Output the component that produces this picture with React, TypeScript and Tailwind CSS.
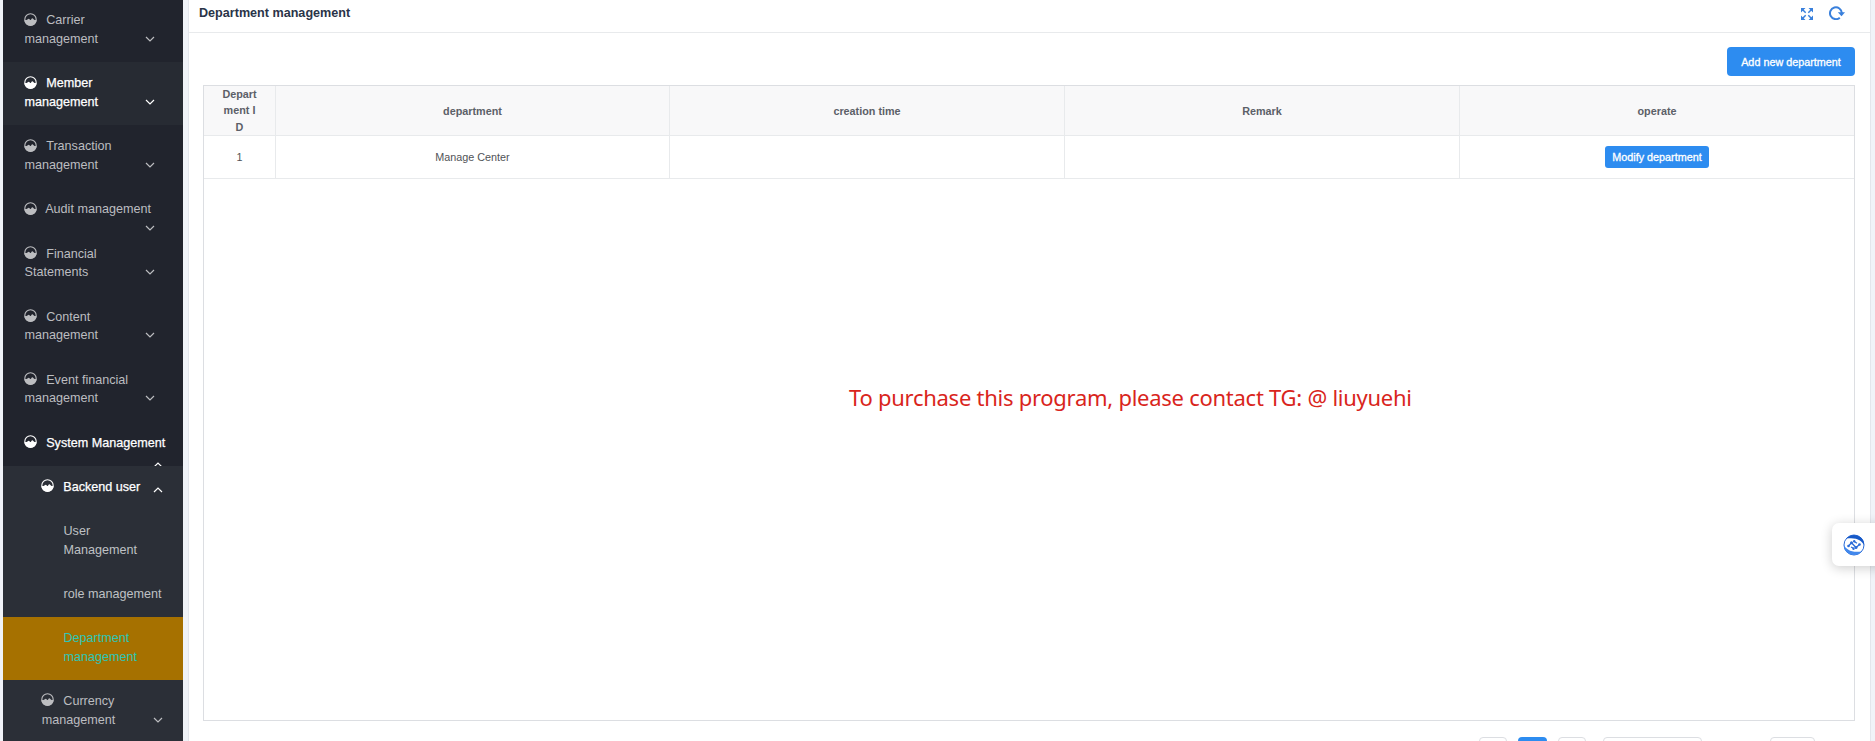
import React from "react";

const Gauge = ({ className = "" }: { className?: string }) => (
  <svg viewBox="0 0 13 13" className={`inline-block h-[13px] w-[13px] ${className}`}>
    <circle cx="6.5" cy="6.5" r="5.7" fill="none" stroke="currentColor" strokeWidth="1.1" />
    <path
      fill="currentColor"
      d="M0.4 6.9 L2.4 6.9 C3.6 6.9 3.9 5.7 4.8 5.7 C5.6 5.7 5.9 7.1 6.5 7.1 C7.1 7.1 7.5 5.3 8.3 5.3 C9.3 5.3 9.4 6.9 10.6 6.9 L12.6 6.9 A6.1 6.1 0 0 1 0.4 6.9Z"
    />
  </svg>
);

const Chevron = ({ up = false }: { up?: boolean }) => (
  <svg viewBox="0 0 10 6" className="h-[6px] w-[10px]" fill="none" stroke="currentColor" strokeWidth="1.2">
    <path d={up ? "M1 5L5 1L9 5" : "M1 1L5 5L9 1"} />
  </svg>
);

type ItemProps = {
  label: React.ReactNode;
  tone?: string;
  lines?: 1 | 2;
  nested?: boolean;
  arrow?: "down" | "up";
  arrowPos?: string;
};

const Item = ({ label, tone = "text-[#bcbdc0]", lines = 2, nested = false, arrow = "down", arrowPos = "right-[28px] top-[36.6px]" }: ItemProps) => (
  <div
    className={`relative overflow-hidden pt-[12px] leading-[18.9px] whitespace-nowrap ${nested ? "pl-[38.7px]" : "pl-[21.6px]"} ${lines === 2 ? "h-[63px]" : "h-[44.1px]"} ${tone}`}
  >
    <Gauge className="-mt-[3px] mr-[9.4px] -ml-[0.8px] align-middle" />
    {label}
    <span className={`absolute flex ${arrowPos}`}>
      <Chevron up={arrow === "up"} />
    </span>
  </div>
);

const Leaf = ({ children, tone = "text-[#bfc1c4]" }: { children: React.ReactNode; tone?: string }) => (
  <div className={`pt-[12.1px] pb-[13.1px] pl-[60.5px] leading-[18.9px] ${tone}`}>{children}</div>
);

const white = "text-white [-webkit-text-stroke:0.25px_white]";

const Sidebar = () => (
  <aside className="h-[741px] w-[180px] shrink-0 overflow-hidden bg-[#21242d] text-[12.6px]">
    <div className="-mt-[0.6px]">
      <Item label={<>Carrier<br />management</>} />
      <Item label={<>Member<br />management</>} tone={`bg-[#272b33] ${white}`} />
      <Item label={<>Transaction<br />management</>} />
      <Item label={<span className="-ml-[1px]">Audit management</span>} lines={1} />
      <Item label={<>Financial<br />Statements</>} />
      <Item label={<>Content<br />management</>} />
      <Item label={<>Event financial<br />management</>} />
      <Item label="System Management" lines={1} tone={white} arrow="up" arrowPos="right-[20px] top-[40.4px]" />
      <div className="bg-[#2b2f37]">
        <Item label="Backend user" lines={1} nested tone={white} arrow="up" arrowPos="right-[20px] top-[21px]" />
        <Leaf>User<br />Management</Leaf>
        <Leaf>role management</Leaf>
        <Leaf tone="bg-[#a67100] text-[#2dc6b6]">Department<br />management</Leaf>
        <Item label={<>Currency<br />management</>} nested arrowPos="right-[20px] top-[37px]" />
      </div>
    </div>
  </aside>
);

const cols = "grid grid-cols-[72px_394px_395px_395px_1fr]";
const cell = "flex items-center justify-center border-r border-b border-[#e8eaec] last:border-r-0";

const Table = () => (
  <div className="mt-[9px] h-[636px] border border-[#dcdee2] text-[10.8px]">
    <div className={`${cols} h-[50px] bg-[#f8f8f9] font-bold text-[#5c6068]`}>
      <div className={`${cell} text-center leading-[16.2px]`}>
        <span>Depart<br />ment I<br />D</span>
      </div>
      <div className={`${cell} pt-[2px]`}>department</div>
      <div className={`${cell} pt-[2px]`}>creation time</div>
      <div className={`${cell} pt-[2px]`}>Remark</div>
      <div className={`${cell} pt-[2px]`}>operate</div>
    </div>
    <div className={`${cols} h-[43px] text-[#515357]`}>
      <div className={cell}>1</div>
      <div className={cell}>Manage Center</div>
      <div className={cell} />
      <div className={cell} />
      <div className={cell}>
        <button className="h-[22px] w-[104px] rounded-[3px] bg-[#2d8cf0] text-white [-webkit-text-stroke:0.3px_white]">Modify department</button>
      </div>
    </div>
  </div>
);

const Pager = () => (
  <div className="mt-[16px] flex h-[29px] pl-[1276px]">
    <span className="w-[28px] rounded-[4px] border border-[#dcdee2]" />
    <span className="ml-[11px] w-[29px] rounded-[4px] bg-[#2d8cf0]" />
    <span className="ml-[11px] w-[28px] rounded-[4px] border border-[#dcdee2]" />
    <span className="ml-[17px] w-[99px] rounded-[4px] border border-[#dcdee2]" />
    <span className="ml-[68px] w-[45px] rounded-[4px] border border-[#dcdee2]" />
  </div>
);

export default function App() {
  return (
    <div className="relative flex h-[741px] w-[1875px] overflow-hidden bg-[#f0f3f8] pl-[3px] font-['Liberation_Sans',Arial,sans-serif]">
      <Sidebar />
      <main className="ml-[5px] h-[741px] w-[1683px] shrink-0 overflow-hidden border-x border-[#e3e6ec] bg-white">
        <header className="flex h-[33px] items-start justify-between border-b border-[#e8eaec] pr-[25px] pl-[10px]">
          <h1 className="pt-[4px] text-[12.6px] leading-[19px] font-bold text-[#2a3448]">Department management</h1>
          <div className="flex items-center gap-[16px] pt-[6px] text-[#3a80dc]">
            <svg viewBox="0 0 12 12" className="mt-[1px] h-[12px] w-[12px]" fill="currentColor" stroke="currentColor">
              <path stroke="none" d="M0 0h4.500L0 4.500zM12 0v4.500L7.500 0zM0 12V7.500l4.500 4.500zM12 12H7.500l4.500-4.500z" />
              <path strokeWidth="1.5" d="M1 1l3.700 3.700M11 1L7.300 4.700M1 11l3.700-3.700M11 11L7.300 7.300" />
            </svg>
            <svg viewBox="0 0 16 14" className="h-[14px] w-[16px]" fill="none" stroke="currentColor" strokeWidth="2">
              <path d="M10.800 11.700A5.900 5.900 0 1 1 12.800 7" />
              <path fill="currentColor" stroke="none" d="M8.800 6.200h7.200L12.500 10.200z" />
            </svg>
          </div>
        </header>
        <div className="pt-[14px] pr-[15px] pl-[14px]">
          <div className="flex justify-end">
            <button className="h-[29px] w-[128px] rounded-[4px] bg-[#2d8cf0] pt-[1px] text-[10.8px] text-white [-webkit-text-stroke:0.3px_white]">Add new department</button>
          </div>
          <Table />
          <Pager />
        </div>
      </main>
      <p className="absolute top-[380px] left-[849px] font-['Noto_Sans',sans-serif] text-[22px] leading-[34px] tracking-[-0.265px] whitespace-nowrap text-[#d9251c]">
        To purchase this program, please contact TG: @ liuyuehi
      </p>
      <div className="absolute top-[523px] left-[1832px] flex h-[43px] w-[60px] items-center rounded-[7px] bg-white pt-px pl-[10.5px] shadow-[0_2px_12px_rgba(0,0,0,0.2)]">
        <svg viewBox="0 0 22 22" className="h-[22px] w-[22px]" fill="none" stroke="#2b6cd8">
          <circle cx="11" cy="11" r="10" strokeWidth="1" />
          <path fill="#1759c8" stroke="none" d="M3.500 4.500C7 0 14-.2 18.500 4c1.800 2 2.600 4 2.600 7C18.500 6.500 14 3 3.500 4.500Z" />
          <path fill="#4288ec" stroke="none" d="M18.500 17.500C15 22 8 22.200 3.500 18c-1.800-2-2.600-4-2.600-7C3.500 15.500 8 19 18.500 17.500Z" />
          <path strokeWidth="1.3" d="M5.500 12L8.500 8.800L13 13.500L16.500 10.500M11.200 7.500L14 9.200M8 13L11 14.500" />
          <g fill="#2b6cd8" stroke="none">
            <circle cx="5.500" cy="12" r="1.300" />
            <circle cx="8.500" cy="8.800" r="1.500" />
            <circle cx="11.200" cy="7.300" r="1.200" />
            <circle cx="13" cy="13.500" r="1.500" />
            <circle cx="16.500" cy="10.500" r="1.300" />
            <circle cx="10.500" cy="14.700" r="1.200" />
          </g>
        </svg>
      </div>
    </div>
  );
}
